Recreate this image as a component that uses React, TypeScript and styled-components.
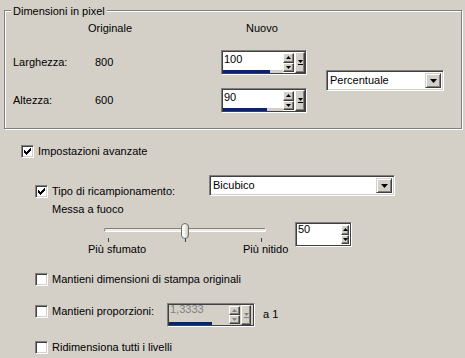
import React from 'react';
import styled, { createGlobalStyle } from 'styled-components';

const GlobalStyle = createGlobalStyle`
  html, body { margin: 0; padding: 0; background: #d4d0c8; }
  body {
    font-family: "Liberation Sans", Arial, sans-serif;
    font-size: 11px;
    color: #000;
  }
`;

const Page = styled.div`
  width: 465px;
  height: 358px;
  box-sizing: border-box;
  padding: 10px 0 0 4px;
  display: flex;
  flex-direction: column;
  overflow: hidden;
`;

/* etched group box */
const Group = styled.div`
  position: relative;
  width: 458px;
  box-sizing: border-box;
  border: 1px solid #808080;
  box-shadow: inset 1px 1px 0 #fff, 1px 1px 0 #fff;
  padding: 11px 0 15px 8px;
`;

const Legend = styled.span`
  position: absolute;
  top: -6px;
  left: 6px;
  padding: 0 2px;
  background: #d4d0c8;
  line-height: 13px;
`;

const SizeGrid = styled.div`
  display: grid;
  grid-template-columns: 82px 126px 105px 118px;
  grid-template-rows: 15px 25px 25px;
  row-gap: 13px;
  align-items: center;
`;

const Head = styled.span<{ $shift: number }>`
  align-self: start;
  line-height: 13px;
  margin-left: ${p => p.$shift}px;
`;

const Cell = styled.span`
  line-height: 13px;
`;

const UnitCell = styled.div`
  grid-column: 4;
  grid-row: 2 / 4;
  align-self: start;
  margin-top: 20px;
`;

/* checkbox */
const Box = styled.span`
  box-sizing: border-box;
  width: 13px;
  height: 13px;
  flex: none;
  background: #fff;
  border: 1px solid;
  border-color: #808080 #fff #fff #808080;
  box-shadow: inset 1px 1px 0 #404040, inset -1px -1px 0 #d4d0c8;
  display: flex;
  align-items: center;
  justify-content: center;
`;

const CheckRow = styled.label<{ $w?: number; $top?: number }>`
  display: flex;
  align-items: center;
  gap: 4px;
  height: 13px;
  line-height: 13px;
  flex: none;
  width: ${p => (p.$w ? `${p.$w}px` : 'auto')};
  margin-top: ${p => p.$top || 0}px;
  white-space: nowrap;
`;

const Tick = () => (
  <svg width="7" height="7" viewBox="0 0 7 7" shapeRendering="crispEdges">
    <path
      fill="#000"
      d="M0 2h1v3h-1z M1 3h1v3h-1z M2 4h1v3h-1z M3 3h1v3h-1z M4 2h1v3h-1z M5 1h1v3h-1z M6 0h1v3h-1z"
    />
  </svg>
);

const Check: React.FC<{ checked?: boolean; label: string; w?: number; top?: number }> = ({ checked, label, w, top }) => (
  <CheckRow $w={w} $top={top}>
    <Box>{checked && <Tick />}</Box>
    <span>{label}</span>
  </CheckRow>
);

/* raised little button */
const Raised = styled.span`
  box-sizing: border-box;
  background: #d4d0c8;
  border: 1px solid;
  border-color: #d4d0c8 #404040 #404040 #d4d0c8;
  box-shadow: inset 1px 1px 0 #fff, inset -1px -1px 0 #808080;
  display: flex;
  align-items: center;
  justify-content: center;
`;

const SmallBtn = styled(Raised)`
  flex: 1;
  border-color: #fff #404040 #404040 #fff;
  box-shadow: inset -1px -1px 0 #808080;
`;

const Arrows = styled.div<{ $w: number }>`
  width: ${p => p.$w}px;
  display: flex;
  flex-direction: column;
  margin: 1px 0;
`;

const PopBtn = styled(Raised)`
  width: 10px;
  margin-left: 1px;
  flex-direction: column;
  gap: 1px;
  border-color: #fff #404040 #404040 #fff;
  box-shadow: inset -1px -1px 0 #808080;
`;

const Tri: React.FC<{ up?: boolean; w?: number; color?: string }> = ({ up, w = 5, color = '#000' }) => {
  const h = Math.ceil(w / 2);
  const d = up ? `M${w / 2} 0 L${w} ${h} L0 ${h}Z` : `M0 0 L${w} 0 L${w / 2} ${h}Z`;
  return (
    <svg width={w} height={h} viewBox={`0 0 ${w} ${h}`}>
      <path d={d} fill={color} />
    </svg>
  );
};

/* spin edit */
const SpinBox = styled.div<{ $w: number; $h: number; $off?: boolean }>`
  box-sizing: border-box;
  width: ${p => p.$w}px;
  height: ${p => p.$h}px;
  flex: none;
  display: flex;
  padding: 1px;
  background: ${p => (p.$off ? '#d4d0c8' : '#fff')};
  border: 1px solid;
  border-color: #808080 #fff #fff #808080;
  box-shadow: inset 0 0 0 1px #404040;
`;

const Field = styled.div<{ $w: number }>`
  width: ${p => p.$w}px;
  display: flex;
  flex-direction: column;
`;

const Value = styled.div<{ $mt: number; $off?: boolean }>`
  flex: 1;
  line-height: 11px;
  padding-left: 1px;
  margin-top: ${p => p.$mt}px;
  color: ${p => (p.$off ? '#808080' : '#000')};
`;

const BarTrack = styled.div`
  height: 3px;
  background: #d4d0c8;
  display: flex;
`;

const BarFill = styled.div`
  background: #0a246a;
`;

interface SpinProps {
  value: string;
  w: number;
  h: number;
  field: number;
  arrowW: number;
  mt: number;
  fill?: number;
  popup?: boolean;
  off?: boolean;
}

const Spin: React.FC<SpinProps> = ({ value, w, h, field, arrowW, mt, fill, popup, off }) => {
  const arrowColor = off ? '#808080' : '#000';
  return (
    <SpinBox $w={w} $h={h} $off={off}>
      <Field $w={field}>
        <Value $mt={mt} $off={off}>{value}</Value>
        {fill !== undefined && (
          <BarTrack>
            <BarFill style={{ width: `${fill * 100}%` }} />
          </BarTrack>
        )}
      </Field>
      <Arrows $w={arrowW}>
        <SmallBtn><Tri up color={arrowColor} /></SmallBtn>
        <SmallBtn><Tri color={arrowColor} /></SmallBtn>
      </Arrows>
      {popup && (
        <PopBtn>
          <Tri color={arrowColor} />
          <svg width="5" height="1"><rect width="5" height="1" fill={arrowColor} /></svg>
        </PopBtn>
      )}
    </SpinBox>
  );
};

/* combo box */
const Combo = styled.div<{ $w: number }>`
  box-sizing: border-box;
  width: ${p => p.$w}px;
  height: 21px;
  flex: none;
  display: flex;
  align-items: stretch;
  background: #fff;
  border: 1px solid;
  border-color: #808080 #fff #fff #808080;
  box-shadow: inset 1px 1px 0 #404040, inset -1px -1px 0 #d4d0c8;
  padding: 2px;
`;

const ComboText = styled.span`
  flex: 1;
  padding-left: 1px;
  line-height: 15px;
`;

const ComboBtn = styled(Raised)`
  width: 16px;
`;

const Select: React.FC<{ value: string; w: number }> = ({ value, w }) => (
  <Combo $w={w}>
    <ComboText>{value}</ComboText>
    <ComboBtn><Tri w={7} /></ComboBtn>
  </Combo>
);

/* lower options */
const Lower = styled.div`
  display: flex;
  flex-direction: column;
  margin-top: 16px;
  padding-left: 17px;
`;

const Row = styled.div<{ $top: number; $indent?: number }>`
  display: flex;
  align-items: flex-start;
  margin-top: ${p => p.$top}px;
  margin-left: ${p => p.$indent || 0}px;
`;

const Caption = styled.span`
  line-height: 13px;
`;

const Slider = styled.div`
  width: 207px;
  flex: none;
  display: flex;
  flex-direction: column;
  margin-left: 53px;
`;

const TrackArea = styled.div`
  position: relative;
  width: 162px;
  height: 21px;
  margin-left: 16px;
`;

const Rail = styled.div`
  position: absolute;
  top: 6px;
  left: 0;
  right: 0;
  height: 4px;
  box-sizing: border-box;
  border-radius: 2px;
  border: 1px solid #808080;
  border-bottom-color: #fff;
  border-right-color: #fff;
  background: #ecebe6;
`;

const Thumb = styled.div`
  position: absolute;
  top: 1px;
  width: 8px;
  height: 16px;
  box-sizing: border-box;
  border-radius: 4px;
  border: 1px solid #6e6e6e;
  background: linear-gradient(90deg, #fff 0%, #f1f0ec 50%, #c9c6bd 100%);
`;

const Mark = styled.div`
  position: absolute;
  top: 16px;
  width: 1px;
  height: 4px;
  background: #404040;
`;

const Ends = styled.div`
  display: flex;
  line-height: 13px;
  white-space: nowrap;
`;

const EndLeft = styled.span`
  width: 155px;
  flex: none;
`;

const Suffix = styled.span`
  margin-left: 8px;
  line-height: 24px;
  margin-top: -1px;
`;

const sharpness = 50;

export default function App() {
  const range = 162 - 8;
  const thumbLeft = Math.round((sharpness / 100) * range);
  return (
    <>
      <GlobalStyle />
      <Page>
        <Group>
          <Legend>Dimensioni in pixel</Legend>
          <SizeGrid>
            <span />
            <Head $shift={-7}>Originale</Head>
            <Head $shift={25}>Nuovo</Head>
            <span />
            <Cell>Larghezza:</Cell>
            <Cell>800</Cell>
            <Spin value="100" w={86} h={25} field={60} arrowW={11} mt={2} fill={0.78} popup />
            <UnitCell>
              <Select value="Percentuale" w={118} />
            </UnitCell>
            <Cell>Altezza:</Cell>
            <Cell>600</Cell>
            <Spin value="90" w={86} h={25} field={60} arrowW={11} mt={2} fill={0.73} popup />
          </SizeGrid>
        </Group>

        <Lower>
          <Check checked label="Impostazioni avanzate" />

          <Row $top={17} $indent={14}>
            <Check checked label="Tipo di ricampionamento:" w={174} top={10} />
            <Select value="Bicubico" w={186} />
          </Row>

          <Row $top={5} $indent={31}>
            <Caption>Messa a fuoco</Caption>
          </Row>

          <Row $top={6} $indent={14}>
            <Slider>
              <TrackArea>
                <Rail />
                <Mark style={{ left: 4 }} />
                <Mark style={{ left: 4 + thumbLeft }} />
                <Mark style={{ left: 4 + range - 1 }} />
                <Thumb style={{ left: thumbLeft }} />
              </TrackArea>
              <Ends>
                <EndLeft>Più sfumato</EndLeft>
                <span>Più nitido</span>
              </Ends>
            </Slider>
            <Spin value="50" w={57} h={25} field={44} arrowW={8} mt={0} />
          </Row>

          <Row $top={17} $indent={14}>
            <Check label="Mantieni dimensioni di stampa originali" />
          </Row>

          <Row $top={17} $indent={14}>
            <Check label="Mantieni proporzioni:" w={132} top={2} />
            <Spin value="1,3333" w={88} h={24} field={60} arrowW={11} mt={-1} fill={0.72} popup off />
            <Suffix>a 1</Suffix>
          </Row>

          <Row $top={14} $indent={14}>
            <Check label="Ridimensiona tutti i livelli" />
          </Row>
        </Lower>
      </Page>
    </>
  );
}
